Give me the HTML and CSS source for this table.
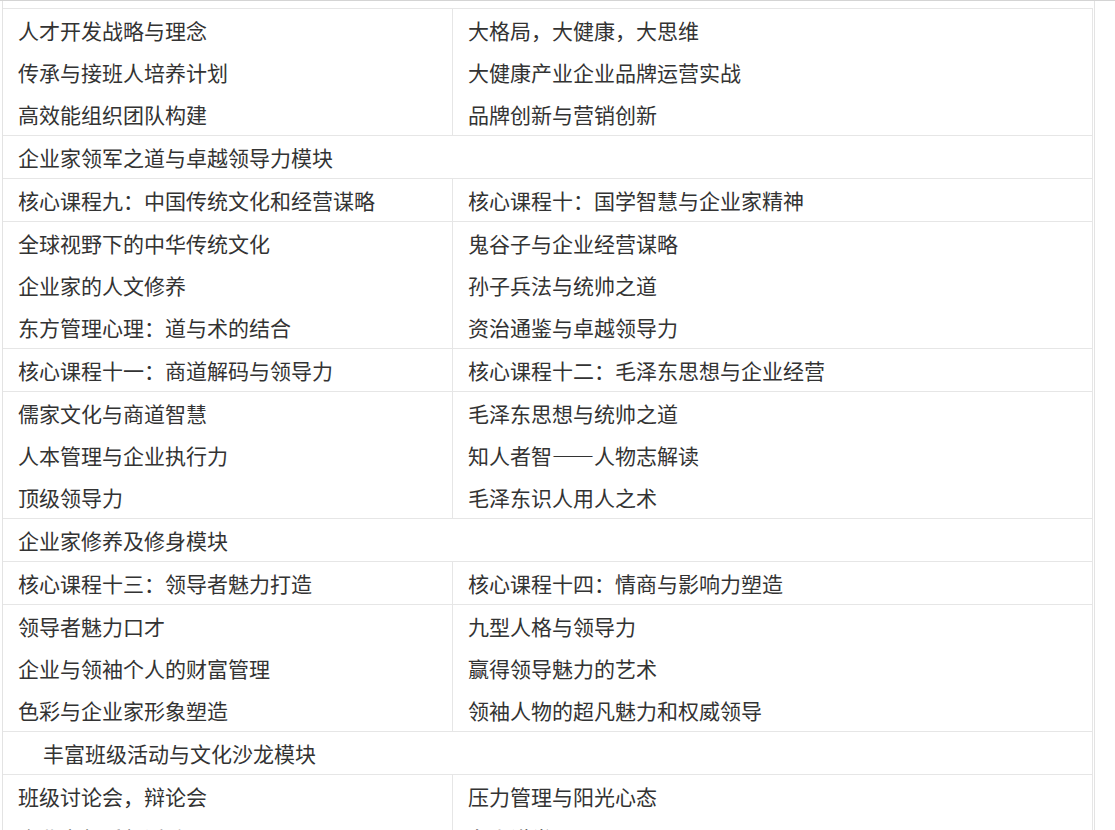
FILE: index.html
```html
<!DOCTYPE html>
<html lang="zh">
<head>
<meta charset="utf-8">
<link rel="stylesheet" href="styles.css">
</head>
<body>
<div class="topline">
  <div class="frame">
    <table class="course">
      <tr>
        <td><div class="ln">人才开发战略与理念</div><div class="ln">传承与接班人培养计划</div><div class="ln">高效能组织团队构建</div></td>
        <td><div class="ln">大格局，大健康，大思维</div><div class="ln">大健康产业企业品牌运营实战</div><div class="ln">品牌创新与营销创新</div></td>
      </tr>
      <tr><td colspan="2"><div class="ln">企业家领军之道与卓越领导力模块</div></td></tr>
      <tr>
        <td><div class="ln">核心课程九：中国传统文化和经营谋略</div></td>
        <td><div class="ln">核心课程十：国学智慧与企业家精神</div></td>
      </tr>
      <tr>
        <td><div class="ln">全球视野下的中华传统文化</div><div class="ln">企业家的人文修养</div><div class="ln">东方管理心理：道与术的结合</div></td>
        <td><div class="ln">鬼谷子与企业经营谋略</div><div class="ln">孙子兵法与统帅之道</div><div class="ln">资治通鉴与卓越领导力</div></td>
      </tr>
      <tr>
        <td><div class="ln">核心课程十一：商道解码与领导力</div></td>
        <td><div class="ln">核心课程十二：毛泽东思想与企业经营</div></td>
      </tr>
      <tr>
        <td><div class="ln">儒家文化与商道智慧</div><div class="ln">人本管理与企业执行力</div><div class="ln">顶级领导力</div></td>
        <td><div class="ln">毛泽东思想与统帅之道</div><div class="ln">知人者智——人物志解读</div><div class="ln">毛泽东识人用人之术</div></td>
      </tr>
      <tr><td colspan="2"><div class="ln">企业家修养及修身模块</div></td></tr>
      <tr>
        <td><div class="ln">核心课程十三：领导者魅力打造</div></td>
        <td><div class="ln">核心课程十四：情商与影响力塑造</div></td>
      </tr>
      <tr>
        <td><div class="ln">领导者魅力口才</div><div class="ln">企业与领袖个人的财富管理</div><div class="ln">色彩与企业家形象塑造</div></td>
        <td><div class="ln">九型人格与领导力</div><div class="ln">赢得领导魅力的艺术</div><div class="ln">领袖人物的超凡魅力和权威领导</div></td>
      </tr>
      <tr><td colspan="2"><div class="ln indent">丰富班级活动与文化沙龙模块</div></td></tr>
      <tr>
        <td><div class="ln">班级讨论会，辩论会</div><div class="ln">企业家俱乐部活动</div><div class="ln">游学考察</div></td>
        <td><div class="ln">压力管理与阳光心态</div><div class="ln">名人讲堂</div><div class="ln">文化沙龙</div></td>
      </tr>
    </table>
  </div>
</div>
</body>
</html>
```

FILE: styles.css
```css
html, body {
  margin: 0;
  padding: 0;
  background: #ffffff;
}
body {
  font-family: "Noto Sans CJK SC", "Noto Sans", sans-serif;
  color: #333333;
  overflow: hidden;
}
.topline {
  border-top: 1px solid #d4d4d4;
}
.frame {
  margin-left: 2px;
  width: 1091px;
  border-left: 1px solid #e3e3e3;
  border-right: 1px solid #e3e3e3;
  padding-top: 7px;
  min-height: 900px;
}
.course {
  border-collapse: collapse;
  width: 1090px;
  table-layout: fixed;
}
.course td {
  border-top: 1px solid #e6e6e6;
  border-bottom: 1px solid #e6e6e6;
  border-right: 1px solid #e6e6e6;
  padding: 0 15px;
  vertical-align: top;
}
.course td:first-child {
  width: 419px;
}
.ln {
  height: 42px;
  line-height: 42px;
  font-size: 21px;
  white-space: nowrap;
}
.indent {
  padding-left: 25px;
}
```
